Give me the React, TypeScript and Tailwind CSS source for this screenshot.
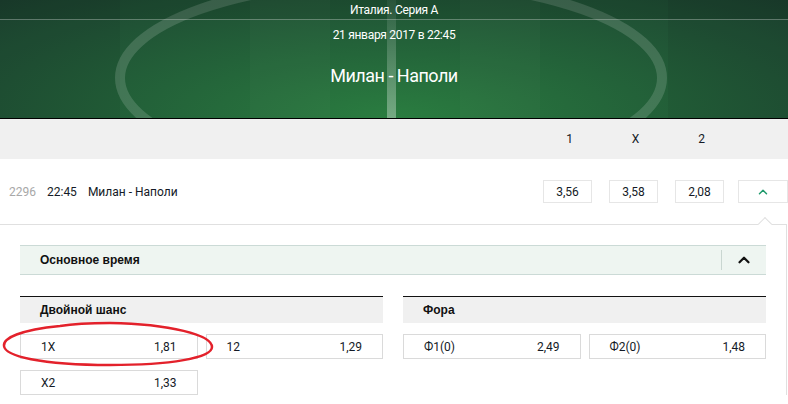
import { ChevronUp } from "lucide-react"

const odds = ["3,56", "3,58", "2,08"]

const markets = [
  {
    title: "Двойной шанс",
    options: [
      { name: "1X", value: "1,81" },
      { name: "12", value: "1,29" },
      { name: "X2", value: "1,33" },
    ],
  },
  {
    title: "Фора",
    options: [
      { name: "Ф1(0)", value: "2,49" },
      { name: "Ф2(0)", value: "1,48" },
    ],
  },
]

function Banner() {
  return (
    <div className="relative h-[119px] overflow-hidden border-b border-black bg-[radial-gradient(ellipse_at_50%_100%,#2a7d40_0%,#236239_45%,#1d4331_100%)] text-white">
      {/* pitch markings */}
      <svg className="absolute inset-0" width="788" height="118" viewBox="0 0 788 118">
        <defs>
          <linearGradient id="mid" x1="0" y1="0" x2="0" y2="1">
            <stop offset="0" stopColor="#fff" stopOpacity="0.06" />
            <stop offset="1" stopColor="#fff" stopOpacity="0.35" />
          </linearGradient>
        </defs>
        <rect x="0" y="0" width="120" height="118" fill="#000" opacity="0.05" />
        <rect x="668" y="0" width="120" height="118" fill="#000" opacity="0.05" />
        <rect x="250" y="0" width="80" height="118" fill="#fff" opacity="0.02" />
        <rect x="460" y="0" width="80" height="118" fill="#fff" opacity="0.02" />
        <ellipse cx="391" cy="78" rx="271" ry="97" fill="none" stroke="#fff" strokeOpacity="0.15" strokeWidth="10" />
        <rect x="387" y="0" width="9" height="118" fill="url(#mid)" />
      </svg>
      <div className="relative flex flex-col items-center">
        <div className="flex h-[20px] w-full items-center justify-center border-b border-white/30 bg-black/10 text-[12px] tracking-[-0.3px]">
          Италия. Серия А
        </div>
        <div className="mt-[6px] text-[12px] tracking-[-0.3px]">21 января 2017 в 22:45</div>
        <div className="mt-[18px] text-[18px] tracking-[-0.5px]">Милан - Наполи</div>
      </div>
    </div>
  )
}

export default function App() {
  return (
    <div className="relative h-[404px] w-[788px] overflow-hidden bg-white font-['Roboto',sans-serif] text-[#141a26]">
      <Banner />

      <div className="flex h-10 items-center justify-end gap-[17px] bg-[#f0f0f0] pr-[62px] text-[12px]">
        <span className="w-[49px] text-center">1</span>
        <span className="w-[49px] text-center">X</span>
        <span className="w-[49px] text-center">2</span>
      </div>

      <div className="flex h-[65px] items-center text-[12px]">
        <div className="flex items-center gap-[11px] pl-[9px]">
          <span className="text-[#a8a8a8]">2296</span>
          <span>22:45</span>
          <span>Милан - Наполи</span>
        </div>
        <div className="ml-auto flex items-center gap-[14px]">
          <div className="flex items-center gap-[17px]">
            {odds.map((o, i) => (
              <div
                key={i}
                className="flex h-[23px] w-[49px] items-center justify-center border border-[#e6e6e6] text-[12px]"
              >
                {o}
              </div>
            ))}
          </div>
          <div className="flex h-[23px] w-[50px] items-center justify-center border border-[#e6e6e6]">
            <ChevronUp className="h-[14px] w-[14px] text-[#1f9a6c]" strokeWidth={2.5} />
          </div>
        </div>
      </div>

      <div className="relative w-[787px] border-r border-t border-[#e0e0e0] px-5 pt-5">
        <div className="absolute -top-[6px] left-[760px] h-[10px] w-[10px] rotate-45 border-l border-t border-[#e0e0e0] bg-white" />

        <div className="flex h-[30px] items-center border-y border-[#cbdad6] bg-[#eef5f1] pl-5">
          <span className="font-['Liberation_Sans',sans-serif] text-[12px] font-bold text-[#111]">Основное время</span>
          <div className="ml-auto flex h-full items-center">
            <div className="h-[20px] w-px bg-[#c9d6d1]" />
            <div className="flex w-[44px] items-center justify-center">
              <ChevronUp className="h-[18px] w-[18px] text-[#111]" strokeWidth={3} />
            </div>
          </div>
        </div>

        <div className="mt-[21px] grid grid-cols-2 gap-5">
          {markets.map((m) => (
            <div key={m.title}>
              <div className="flex h-[27px] items-center border-t border-[#111] bg-[#f0f0f0] pl-5 font-['Liberation_Sans',sans-serif] text-[12px] font-bold text-[#111]">
                {m.title}
              </div>
              <div className="mt-[11px] grid grid-cols-2 gap-x-2 gap-y-[11px]">
                {m.options.map((o) => (
                  <div
                    key={o.name}
                    className="flex h-[25px] items-center justify-between border border-[#dadada] px-5 text-[12px]"
                  >
                    <span>{o.name}</span>
                    <span>{o.value}</span>
                  </div>
                ))}
              </div>
            </div>
          ))}
        </div>
      </div>

      {/* red marker circling 1X */}
      <svg className="pointer-events-none absolute left-0 top-[318px]" width="220" height="54" viewBox="0 0 220 54">
        <path
          d="M60 8 C20 12 3 20 4 28 C5 38 40 47 110 47 C170 47 212 40 212 29 C212 17 170 6 110 5 C90 5 72 6 60 8"
          fill="none"
          stroke="#e3212b"
          strokeWidth="2.5"
        />
      </svg>
    </div>
  )
}
